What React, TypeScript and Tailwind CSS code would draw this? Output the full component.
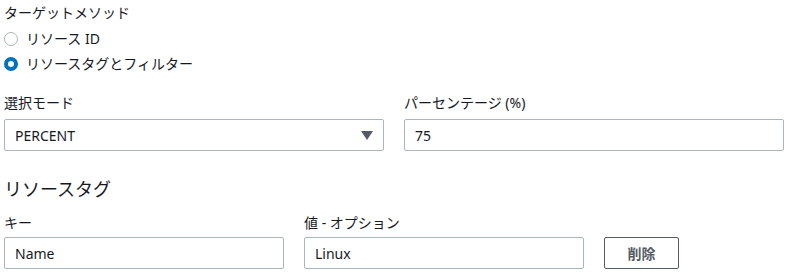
import { useState } from "react";

const font = {
  fontFamily: '"Noto Sans", "Noto Sans CJK JP", sans-serif',
};

function Radio({ checked, label, onSelect }: { checked: boolean; label: string; onSelect: () => void }) {
  return (
    <button type="button" onClick={onSelect} className="flex h-[25px] items-center gap-[8px] text-left">
      {checked ? (
        <span className="flex h-[14px] w-[14px] items-center justify-center rounded-full border-[4px] border-[#0073bb] bg-white" />
      ) : (
        <span className="h-[14px] w-[14px] rounded-full border border-[#aab7b8] bg-white" />
      )}
      <span className="text-[14px] text-[#16191f]">{label}</span>
    </button>
  );
}

function Field({
  label,
  children,
  className,
  gap = "mb-[5px]",
}: {
  label: string;
  children: React.ReactNode;
  className?: string;
  gap?: string;
}) {
  return (
    <div className={"flex flex-col " + (className ?? "")}>
      <span className={gap + " text-[14px] leading-[22px] text-[#16191f]"}>{label}</span>
      {children}
    </div>
  );
}

function TextBox({ value }: { value: string }) {
  return (
    <div className="flex h-[32px] items-center rounded-[2px] border border-[#aab7b8] bg-white px-[10px] text-[14px] text-[#16191f]">
      {value}
    </div>
  );
}

export default function App() {
  const [method, setMethod] = useState<"id" | "tag">("tag");

  return (
    <div className="w-[788px] bg-white px-[4px] pt-[2px]" style={font}>
      <div className="text-[14px] leading-[22px] text-[#16191f]">ターゲットメソッド</div>
      <div className="mt-[2px] flex flex-col">
        <Radio checked={method === "id"} label="リソース ID" onSelect={() => setMethod("id")} />
        <Radio checked={method === "tag"} label="リソースタグとフィルター" onSelect={() => setMethod("tag")} />
      </div>

      <div className="mt-[16px] flex gap-[20px]">
        <Field label="選択モード" className="w-[380px]">
          <div className="flex h-[32px] items-center justify-between rounded-[2px] border border-[#aab7b8] bg-white pl-[10px] pr-[10px] text-[14px] text-[#16191f]">
            <span>PERCENT</span>
            <svg width="12" height="9" viewBox="0 0 12 9">
              <path d="M0 0 H12 L6 9 Z" fill="#545b64" />
            </svg>
          </div>
        </Field>
        <Field label="パーセンテージ (%)" className="w-[380px]">
          <TextBox value="75" />
        </Field>
      </div>

      <div className="mt-[25px] text-[18px] leading-[26px] text-[#16191f]">リソースタグ</div>

      <div className="mt-[10px] flex items-end gap-[20px]">
        <Field label="キー" className="w-[280px]" gap="mb-[3px]">
          <TextBox value="Name" />
        </Field>
        <Field label="値 - オプション" className="w-[280px]" gap="mb-[3px]">
          <TextBox value="Linux" />
        </Field>
        <button
          type="button"
          className="h-[32px] w-[75px] rounded-[2px] border border-[#545b64] bg-white text-[14px] font-bold text-[#545b64]"
        >
          削除
        </button>
      </div>
    </div>
  );
}
